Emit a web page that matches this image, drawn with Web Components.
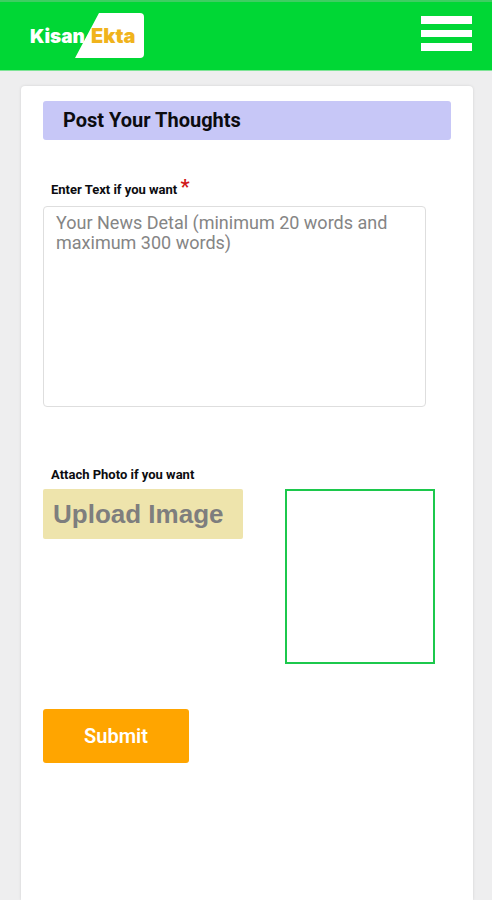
<!DOCTYPE html>
<html lang="en">
<head>
    <meta charset="UTF-8">
    <meta name="viewport" content="width=device-width, initial-scale=1.0">
    <title>Kisan Ekta</title>
    <style>
        body {
            margin: 0;
            min-height: 100vh;
            display: flex;
            flex-direction: column;
            background-color: #eeeeef;
            font-family: Roboto, "Liberation Sans", sans-serif;
            color: #0c0c10;
        }
        form-card {
            flex: 1;
        }
    </style>
</head>
<body>
    <site-header></site-header>
    <form-card heading="Post Your Thoughts">
        <post-form></post-form>
    </form-card>

    <script>
        class SiteLogo extends HTMLElement {
            constructor() {
                super();
                this.attachShadow({ mode: 'open' });
            }

            connectedCallback() {
                this.shadowRoot.innerHTML = `
                    <style>
                        :host {
                            display: block;
                        }
                        a, svg {
                            display: block;
                        }
                        text {
                            font-family: Inter, "Liberation Sans", sans-serif;
                            font-weight: 900;
                            font-size: 19px;
                        }
                        .accent {
                            font-size: 20px;
                        }
                    </style>
                    <a href="#" aria-label="Kisan Ekta">
                        <svg width="116" height="46" viewBox="0 0 116 46">
                            <path d="M69 0H110Q114 0 114 4V41Q114 45 110 45H45Z" fill="#fff"/>
                            <text x="0" y="30" fill="#fff">Kisan</text>
                            <text class="accent" x="61" y="30" fill="#f0b31c">Ekta</text>
                        </svg>
                    </a>
                `;
            }
        }

        class SiteHeader extends HTMLElement {
            constructor() {
                super();
                this.attachShadow({ mode: 'open' });
            }

            connectedCallback() {
                this.shadowRoot.innerHTML = `
                    <style>
                        :host {
                            display: block;
                        }
                        header {
                            display: flex;
                            align-items: flex-start;
                            justify-content: space-between;
                            box-sizing: border-box;
                            height: 71px;
                            padding: 11px 20px 0 30px;
                            background-color: #00d735;
                            border-top: 2px solid #3fce62;
                            border-bottom: 1px solid #7ee496;
                        }
                        button {
                            display: block;
                            margin-top: 3px;
                            padding: 0;
                            border: none;
                            background: none;
                            cursor: pointer;
                        }
                        svg {
                            display: block;
                        }
                    </style>
                    <header>
                        <site-logo></site-logo>
                        <button type="button" aria-label="Menu">
                            <svg width="51" height="35" viewBox="0 0 51 35" fill="#fff">
                                <rect width="51" height="8"/>
                                <rect y="14" width="51" height="7"/>
                                <rect y="27" width="51" height="8"/>
                            </svg>
                        </button>
                    </header>
                `;
            }
        }

        class FormCard extends HTMLElement {
            constructor() {
                super();
                this.attachShadow({ mode: 'open' });
            }

            connectedCallback() {
                this.shadowRoot.innerHTML = `
                    <style>
                        :host {
                            display: block;
                            margin: 15px 19px 0 21px;
                            padding: 15px 22px 0;
                            background-color: #fff;
                            border-radius: 4px 4px 0 0;
                            box-shadow: 0 0 3px rgba(0, 0, 0, 0.12);
                        }
                        h1 {
                            margin: 0;
                            padding: 0 20px;
                            font-size: 20px;
                            line-height: 39px;
                            font-weight: 700;
                            background-color: #c7c7f7;
                            border-radius: 3px;
                        }
                    </style>
                    <h1>${this.getAttribute('heading') || ''}</h1>
                    <slot></slot>
                `;
            }
        }

        class PostForm extends HTMLElement {
            constructor() {
                super();
                this.attachShadow({ mode: 'open' });
            }

            connectedCallback() {
                this.render();
                this.attachEventListeners();
            }

            render() {
                this.shadowRoot.innerHTML = `
                    <style>
                        :host {
                            display: block;
                        }
                        form {
                            padding: 36px 0 40px;
                        }
                        label {
                            display: block;
                            height: 28px;
                            padding: 0 8px;
                            font-size: 13px;
                            line-height: 28px;
                            font-weight: 700;
                        }
                        .required {
                            font-size: 20px;
                            line-height: 20px;
                            color: #d01818;
                        }
                        .field {
                            margin: 0 25px 54px 0;
                        }
                        textarea {
                            display: block;
                            box-sizing: border-box;
                            width: 100%;
                            height: 201px;
                            margin-top: 2px;
                            padding: 6px 12px;
                            border: 1px solid #dedede;
                            border-radius: 4px;
                            background-color: #fff;
                            font-family: inherit;
                            font-size: 18px;
                            line-height: 20px;
                            resize: none;
                        }
                        textarea::placeholder {
                            color: #858585;
                        }
                        .photo {
                            display: flex;
                            align-items: flex-start;
                            gap: 42px;
                            margin-bottom: 45px;
                        }
                        .upload {
                            width: 200px;
                            height: 50px;
                            padding: 0 10px;
                            border: none;
                            border-radius: 2px;
                            background-color: #eee4ac;
                            color: #7e7e7e;
                            font-family: "Liberation Sans", sans-serif;
                            font-size: 26px;
                            font-weight: 700;
                            text-align: left;
                            cursor: pointer;
                        }
                        .preview {
                            box-sizing: border-box;
                            width: 150px;
                            height: 175px;
                            border: 2px solid #1cc84c;
                            background: center / cover no-repeat;
                        }
                        .submit {
                            width: 146px;
                            height: 54px;
                            border: none;
                            border-radius: 3px;
                            background-color: #ffa500;
                            color: #fff;
                            font-family: inherit;
                            font-size: 20px;
                            font-weight: 600;
                            cursor: pointer;
                        }
                    </style>
                    <form>
                        <div class="field">
                            <label for="news">Enter Text if you want <span class="required">*</span></label>
                            <textarea id="news" placeholder="Your News Detal (minimum 20 words and maximum 300 words)"></textarea>
                        </div>
                        <label for="photo">Attach Photo if you want</label>
                        <div class="photo">
                            <button class="upload" id="photo" type="button">Upload Image</button>
                            <input type="file" accept="image/*" hidden>
                            <div class="preview"></div>
                        </div>
                        <button class="submit" type="submit">Submit</button>
                    </form>
                `;
            }

            attachEventListeners() {
                const fileInput = this.shadowRoot.querySelector('input');
                const preview = this.shadowRoot.querySelector('.preview');

                this.shadowRoot.querySelector('.upload').addEventListener('click', () => {
                    fileInput.click();
                });

                fileInput.addEventListener('change', () => {
                    const file = fileInput.files[0];
                    preview.style.backgroundImage = file ? `url(${URL.createObjectURL(file)})` : '';
                });

                this.shadowRoot.querySelector('form').addEventListener('submit', (event) => {
                    event.preventDefault();
                });
            }
        }

        customElements.define('site-logo', SiteLogo);
        customElements.define('site-header', SiteHeader);
        customElements.define('form-card', FormCard);
        customElements.define('post-form', PostForm);
    </script>
</body>
</html>
